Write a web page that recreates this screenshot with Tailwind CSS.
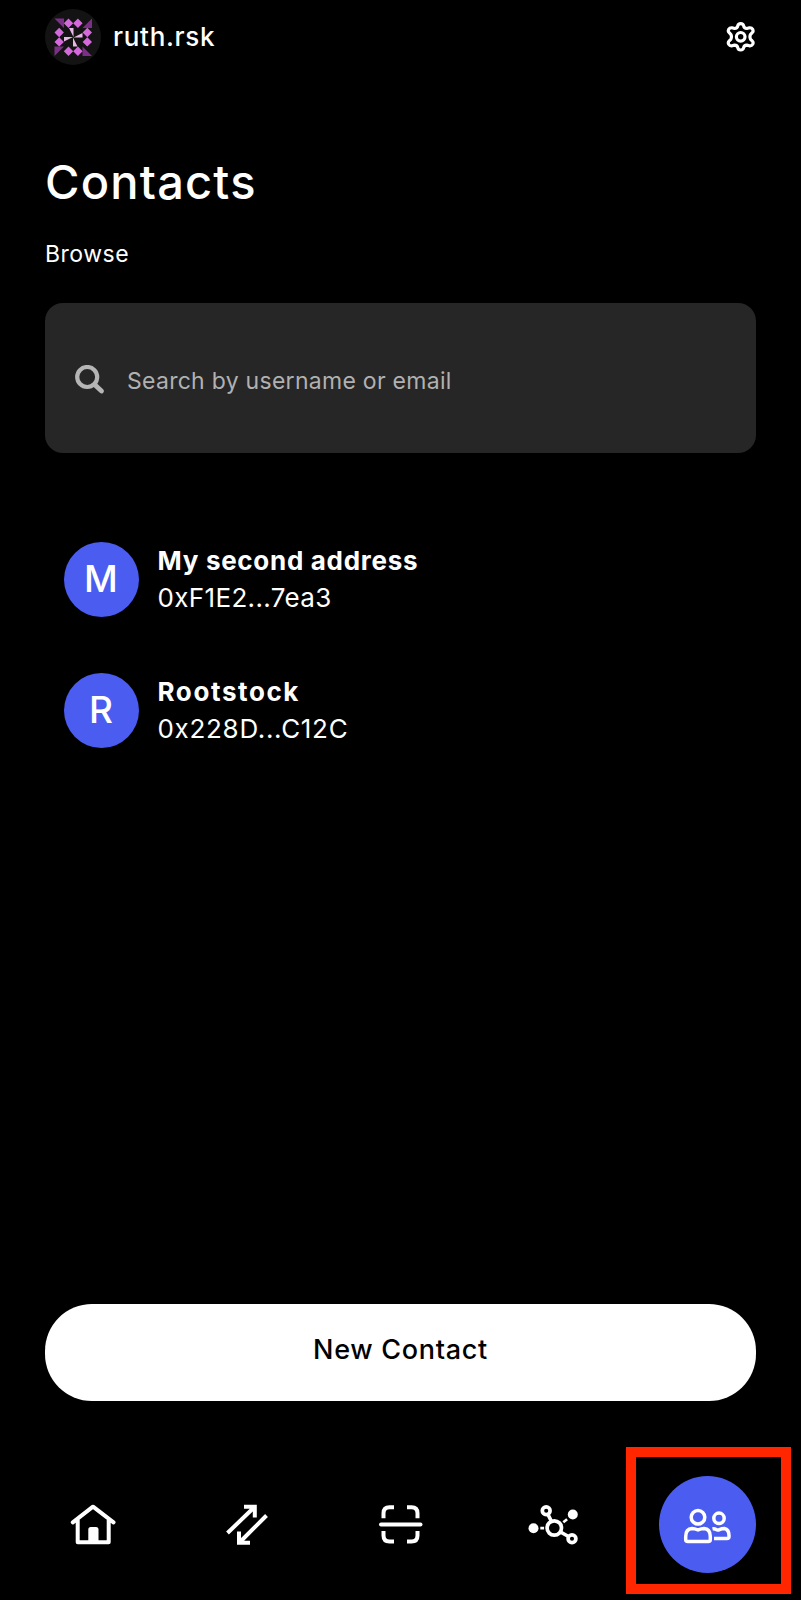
<!DOCTYPE html>
<html lang="en">
<head>
<meta charset="utf-8">
<title>Contacts</title>
<script src="https://cdn.jsdelivr.net/npm/@tailwindcss/browser@4"></script>
</head>
<body class="bg-black text-white">
<div class="flex h-[1600px] w-[801px] flex-col overflow-hidden bg-black font-['Inter',sans-serif]">
  <header class="flex h-[74px] shrink-0 items-center px-[45px]">
    <svg class="size-14 shrink-0" viewBox="0 0 56 56">
      <circle cx="28" cy="28" r="28" fill="#131313"/>
      <path fill="#7c2f86" d="M9.500 9.500H19V19zM47 9.500V19H37.500zM47 47H37.500V37.500zM9.500 47V37.500H19z"/>
      <path fill="#d468dc" d="M23.500 9.500l4.700 4.700-4.700 4.700-4.700-4.700zM32.900 9.500l4.700 4.700-4.700 4.700-4.700-4.700zM23.500 37.500l4.700 4.700-4.700 4.700-4.700-4.700zM32.900 37.500l4.700 4.700-4.700 4.700-4.700-4.700zM14.200 18.800l4.700 4.700-4.700 4.700-4.700-4.700zM14.200 28.200l4.700 4.700-4.700 4.700-4.700-4.700zM42.300 18.800l4.700 4.700-4.700 4.700-4.700-4.700zM42.300 28.200l4.700 4.700-4.700 4.700-4.700-4.700z"/>
      <path fill="#e6b8e8" d="M24 19h4.500v9zM37.500 24v4.500h-9zM32.500 37.500H28v-9zM19 32.500V28h9z"/>
    </svg>
    <span class="-mt-[1px] ml-[12px] text-[26px] leading-[30px] font-medium tracking-[0.7px]">ruth.rsk</span>
    <svg class="ml-auto h-8 w-[30px]" viewBox="0 0 30 32" fill="none" stroke="#fff" stroke-width="3.200" stroke-linejoin="round">
      <path d="M11.800 4.800q.400-2.200 2.900-2.200t2.900 2.200q.500 2.600 3.200 2.700l2.600-.7q2.200-.3 3.300 1.600 1 1.900-.5 3.300l-1.600 1.600q-1.300 2.500 0 5l1.600 1.600q1.500 1.400.5 3.300-1.100 1.900-3.300 1.600l-2.600-.7q-2.700.1-3.200 2.700-.4 2.200-2.900 2.200t-2.900-2.200q-.5-2.600-3.200-2.700l-2.600.7q-2.200.3-3.300-1.600-1-1.900.5-3.300l1.600-1.600q1.300-2.500 0-5l-1.600-1.600q-1.500-1.400-.5-3.300 1.100-1.900 3.300-1.600l2.600.7q2.700-.1 3.200-2.700z"/>
      <circle cx="14.700" cy="15.800" r="4.300"/>
    </svg>
  </header>
  <main class="flex grow flex-col px-[45px]">
    <h1 class="mt-[80px] text-[47px] leading-[56px] font-medium tracking-[1.2px]">Contacts</h1>
    <h2 class="mt-[29px] text-[23px] leading-[30px] tracking-[0.5px]">Browse</h2>
    <div class="mt-[34px] flex h-[150px] items-center rounded-[18px] bg-[#262626] pl-[30px]">
      <svg class="mt-[3px] size-[30px]" viewBox="0 0 30 30" fill="none" stroke="#b5b5b5"><circle cx="12.200" cy="12" r="10" stroke-width="4.200"/><path d="M19.500 19.500l7 6.500" stroke-width="4.800" stroke-linecap="round"/></svg>
      <span class="mt-[6px] ml-[22px] text-[23px] leading-[30px] tracking-[0.28px] text-[#b1b1b1]">Search by username or email</span>
    </div>
    <ul class="mt-[89px] flex flex-col gap-[56px] pl-[18.500px]">
      <li class="flex items-center">
        <div class="flex size-[75px] items-center justify-center rounded-full bg-[#4b5cf0] pb-[2px] text-[37px] leading-none font-medium">M</div>
        <div class="-mt-[2px] ml-[19px] text-[26px] leading-[37px]">
          <p class="font-bold tracking-[0.7px]">My second address</p>
          <p class="tracking-[0.35px]">0xF1E2...7ea3</p>
        </div>
      </li>
      <li class="flex items-center">
        <div class="flex size-[75px] items-center justify-center rounded-full bg-[#4b5cf0] pb-[2px] text-[37px] leading-none font-medium">R</div>
        <div class="-mt-[2px] ml-[19px] text-[26px] leading-[37px]">
          <p class="font-bold tracking-[1.6px]">Rootstock</p>
          <p class="tracking-[0.7px]">0x228D...C12C</p>
        </div>
      </li>
    </ul>
    <button class="mt-auto mb-[45px] h-[97px] rounded-[47px] bg-white pb-[4px] text-[27px] font-medium tracking-[0.7px] text-black">New Contact</button>
  </main>
  <nav class="flex h-[154px] shrink-0 items-start pl-[55px]">
    <svg class="mt-[44px] h-[70px] w-20" viewBox="0 0 80 70" fill="none" stroke="#fff" stroke-width="4" stroke-linecap="round" stroke-linejoin="round"><path d="M17.800 32.300L38 16.700l20.500 15.600M22.700 30v22.200h31V30"/><path d="M33.300 52V39.500q0-2.500 2.500-2.500h5.200q2.500 0 2.500 2.500V52z" fill="#fff" stroke="none"/></svg>
    <svg class="mt-[44px] ml-[75px] h-[70px] w-20" viewBox="0 0 80 70" fill="none" stroke="#fff" stroke-width="4"><path d="M17.500 43L44.500 17M34 16.700h10.800V27.500M56.500 25.500L29.500 52.500M29 41.500v11.200H40"/></svg>
    <svg class="mt-[44px] ml-[75px] h-[70px] w-20" viewBox="0 0 80 70" fill="none" stroke="#fff" stroke-width="4"><path d="M29 17.300h-4.500q-6 0-6 6v5M42 17.300h4.500q6 0 6 6v5M18.500 41v4.500q0 6 6 6H29M52.500 41v4.500q0 6-6 6H42"/><path d="M16 34.500h39.500" stroke-linecap="round"/></svg>
    <svg class="mt-[44px] ml-[70px] h-[70px] w-20" viewBox="0 0 80 70" fill="none" stroke="#fff" stroke-width="3.700"><circle cx="39.300" cy="38" r="7.200"/><circle cx="31.200" cy="20.800" r="3.900"/><circle cx="57" cy="48.700" r="3.900"/><path d="M33 24.500l3.500 7M45.500 42l8 4.500"/><path d="M25.300 38.200h3.800M48.300 32.300l3.800-3" stroke-width="2.700"/><circle cx="18.500" cy="38.300" r="5" fill="#fff" stroke="none"/><circle cx="57.800" cy="24.500" r="5" fill="#fff" stroke="none"/></svg>
    <div class="relative mt-[30px] ml-[63.500px] flex size-[97px] items-center justify-center rounded-full bg-[#4b5cf0]">
      <svg class="size-[97px]" viewBox="44 41 97 97" fill="none" stroke="#fff" stroke-width="3.500" stroke-linejoin="round"><circle cx="83" cy="82.300" r="6.800"/><circle cx="104" cy="83.300" r="5.200"/><path d="M83 95q3.500-1.500 6-1.500 6.300.5 6.300 8v2.900q0 2-2 2H72.700q-2 0-2-2v-2.900q0-7.500 6.300-8 2.500 0 6 1.500zM97.500 94q2-.5 3.500.5 1.500.9 3 .3 3-1.300 5.300-1.300 4.700 1 4.700 7v.9q0 2-2 2H99"/></svg>
      <div class="absolute -top-[29.500px] -left-[32.500px] h-[147px] w-[165px] border-[10px] border-[#ff2600]"></div>
    </div>
  </nav>
</div>
</body>
</html>
